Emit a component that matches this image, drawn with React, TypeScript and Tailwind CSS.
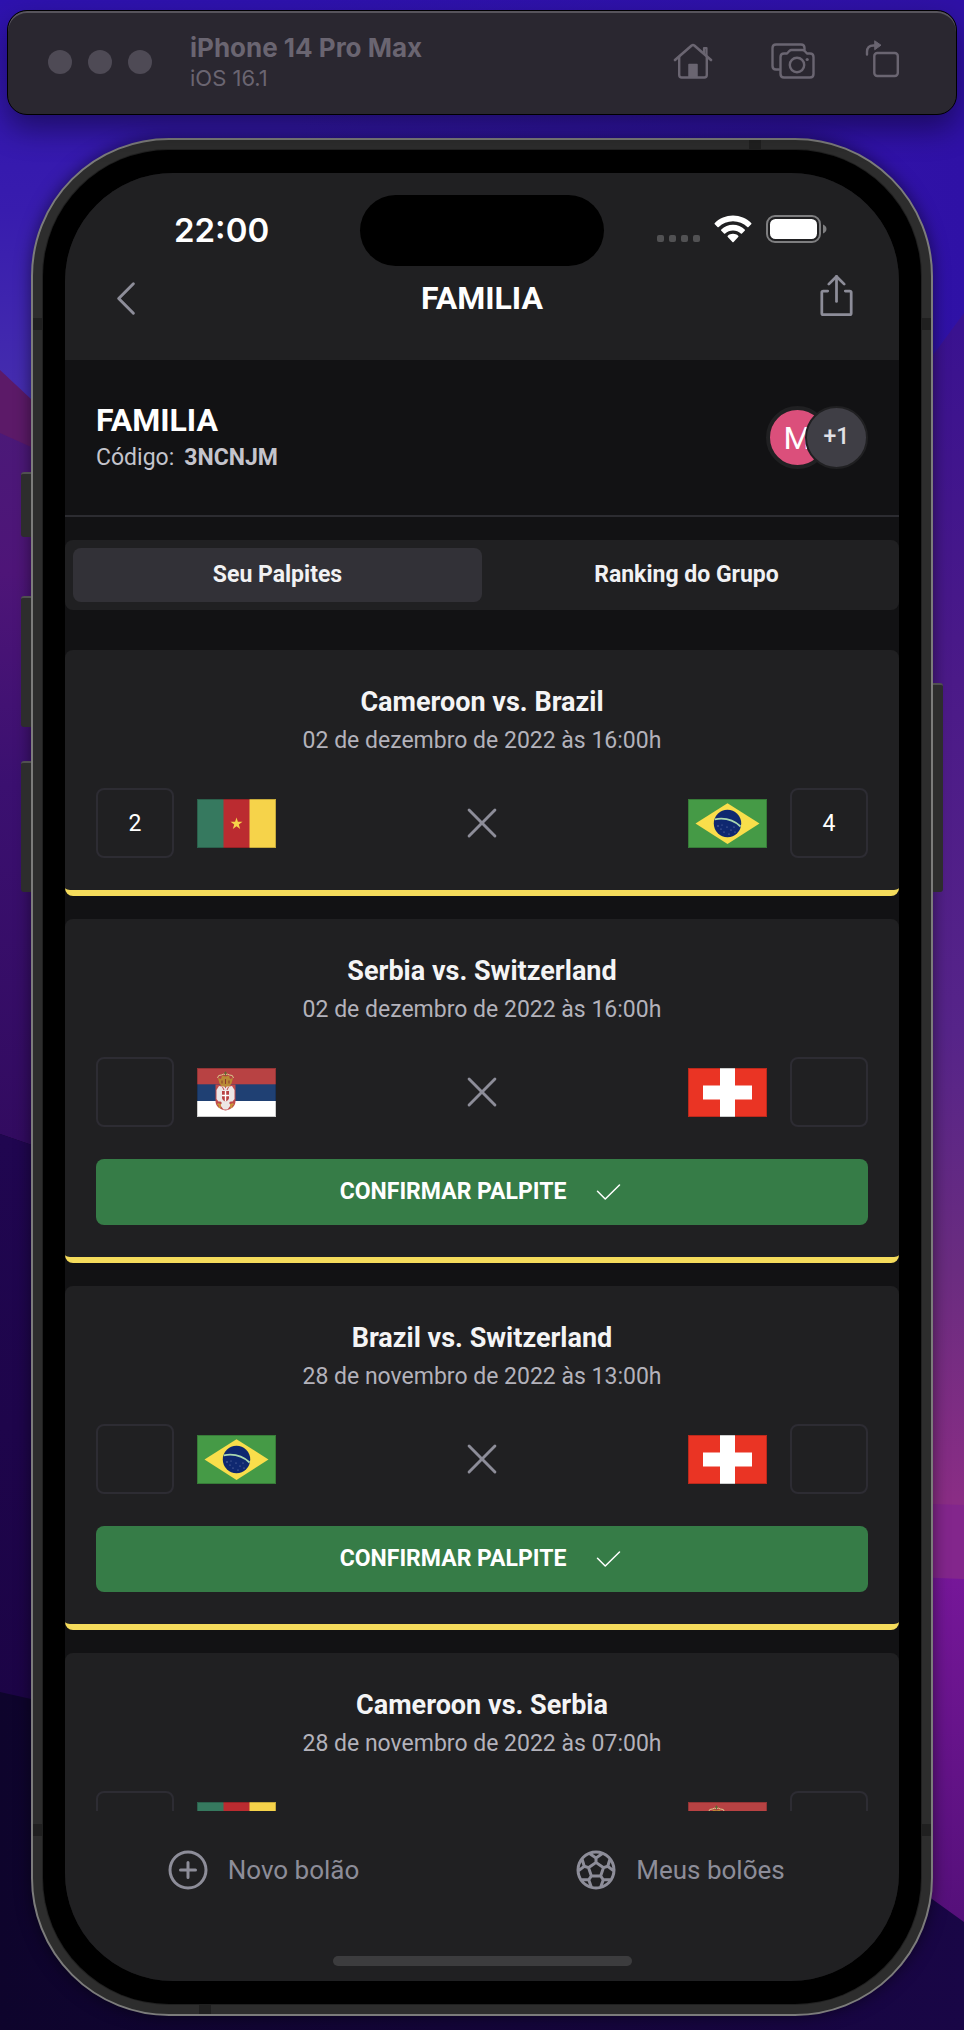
import type { ReactNode } from "react";
import { PiCaretLeft, PiPlusCircle, PiSoccerBall, PiX } from "react-icons/pi";

type Team = "Cameroon" | "Brazil" | "Serbia" | "Switzerland";

type Game = {
  id: number;
  home: Team;
  away: Team;
  date: string;
  canConfirm: boolean;
  homePoints?: string;
  awayPoints?: string;
};

const games: Game[] = [
  { id: 1, home: "Cameroon", away: "Brazil", date: "02 de dezembro de 2022 às 16:00h", canConfirm: false, homePoints: "2", awayPoints: "4" },
  { id: 2, home: "Serbia", away: "Switzerland", date: "02 de dezembro de 2022 às 16:00h", canConfirm: true },
  { id: 3, home: "Brazil", away: "Switzerland", date: "28 de novembro de 2022 às 13:00h", canConfirm: true },
  { id: 4, home: "Cameroon", away: "Serbia", date: "28 de novembro de 2022 às 07:00h", canConfirm: false },
];

function Wallpaper() {
  return (
    <svg className="absolute inset-0 size-full" viewBox="0 0 964 2030" preserveAspectRatio="none" aria-hidden="true">
      <defs>
        <linearGradient id="top" x1="0" y1="0" x2="0" y2="1">
          <stop offset="0" stopColor="#2e12ae" />
          <stop offset="0.5" stopColor="#381cae" />
          <stop offset="1" stopColor="#462fae" />
        </linearGradient>
        <linearGradient id="topRight" x1="0" y1="0" x2="1" y2="0">
          <stop offset="0.3" stopColor="#2f11a6" stopOpacity="0" />
          <stop offset="1" stopColor="#2f11a6" />
        </linearGradient>
        <linearGradient id="left" gradientUnits="userSpaceOnUse" x1="0" y1="430" x2="0" y2="1140">
          <stop offset="0" stopColor="#4b1978" />
          <stop offset="0.2" stopColor="#4e1578" />
          <stop offset="0.5" stopColor="#3b1070" />
          <stop offset="1" stopColor="#320b60" />
        </linearGradient>
        <linearGradient id="leftLow" gradientUnits="userSpaceOnUse" x1="0" y1="1140" x2="0" y2="1710">
          <stop offset="0" stopColor="#200650" />
          <stop offset="1" stopColor="#1c0446" />
        </linearGradient>
        <linearGradient id="right" gradientUnits="userSpaceOnUse" x1="0" y1="330" x2="0" y2="1500">
          <stop offset="0" stopColor="#3a1290" />
          <stop offset="0.3" stopColor="#4b1a88" />
          <stop offset="0.6" stopColor="#562489" />
          <stop offset="0.8" stopColor="#6a2c80" />
          <stop offset="1" stopColor="#8a2d85" />
        </linearGradient>
        <linearGradient id="rightLow" gradientUnits="userSpaceOnUse" x1="0" y1="1575" x2="0" y2="1920">
          <stop offset="0" stopColor="#761799" />
          <stop offset="1" stopColor="#55107a" />
        </linearGradient>
        <linearGradient id="floor" x1="0" y1="0" x2="1" y2="0">
          <stop offset="0" stopColor="#0e042c" />
          <stop offset="1" stopColor="#190646" />
        </linearGradient>
      </defs>
      <rect width="964" height="420" fill="url(#top)" />
      <rect width="964" height="420" fill="url(#topRight)" />
      <path d="M0 430 L482 480 V1300 L0 1134Z" fill="url(#left)" />
      <path d="M0 370 L31 399 L60 440 V460 L0 433Z" fill="#5c1a68" />
      <path d="M0 1134 L482 1300 V1800 L0 1692Z" fill="url(#leftLow)" />
      <path d="M482 400 H900 L964 313 V1520 H482Z" fill="url(#right)" />
      <path d="M482 1490 L964 1505 V1590 H482Z" fill="#83268c" />
      <path d="M482 1560 L964 1579 V1930 L482 1700Z" fill="url(#rightLow)" />
      <path d="M0 1692 L120 1775 H760 L964 1922 V2030 H0Z" fill="url(#floor)" />
    </svg>
  );
}

function HomeIcon() {
  return (
    <svg className="h-9 w-10" viewBox="0 0 40 36" fill="none" stroke="currentColor" strokeWidth="2" strokeLinecap="round" strokeLinejoin="round" aria-hidden="true">
      <path d="M2 17 L18.700 2.500 Q20 1.500 21.300 2.500 L38 17" strokeWidth="2.600" />
      <path d="M6.200 14 V32 Q6.200 34.500 8.700 34.500 H31.300 Q33.800 34.500 33.800 32 V14" strokeWidth="2.400" />
      <path d="M31 10.500 V5 H33.500 V13" strokeWidth="2.200" />
      <path d="M16 34 V21.500 H24 V34Z" fill="currentColor" stroke="currentColor" strokeWidth="1.500" />
    </svg>
  );
}

function ScreenshotIcon() {
  return (
    <svg className="h-9 w-11" viewBox="0 0 44 36" fill="none" stroke="currentColor" strokeWidth="2.400" strokeLinecap="round" strokeLinejoin="round" aria-hidden="true">
      <path d="M8 26.500 H5 Q1.500 26.500 1.500 23 V5 Q1.500 1.500 5 1.500 H30 Q33.500 1.500 33.500 5 V6.500" />
      <path d="M13 10.500 H16 L18.500 7.800 Q19.300 7 20.500 7 H31.500 Q32.700 7 33.500 7.800 L36 10.500 H39 Q42.500 10.500 42.500 14 V31 Q42.500 34.500 39 34.500 H13 Q9.500 34.500 9.500 31 V14 Q9.500 10.500 13 10.500Z" />
      <circle cx="26" cy="22" r="7.200" />
      <circle cx="36.200" cy="16.500" r="1.600" fill="currentColor" stroke="none" />
    </svg>
  );
}

function RotateIcon() {
  return (
    <svg className="h-[38px] w-9" viewBox="0 0 36 38" fill="none" stroke="currentColor" strokeWidth="2.400" strokeLinecap="round" aria-hidden="true">
      <rect x="9.300" y="13" width="23.500" height="23" rx="3" />
      <path d="M2 14.500 V12 Q2 5.500 8.500 5.500 H10" />
      <path d="M10 1 L16 5.200 L10 9.500Z" fill="currentColor" strokeWidth="1" strokeLinejoin="round" />
    </svg>
  );
}

function SimulatorBar() {
  return (
    <header className="relative z-10 mx-[7px] flex h-[105px] shrink-0 items-center rounded-[20px] border border-black bg-[#2a2730] pr-[55px] pb-[2px] pl-[40px] text-[#6a6571] shadow-[inset_0_2px_0_#57545c,0_14px_30px_rgba(0,0,0,0.4)]">
      <div className="flex gap-4">
        <span className="size-6 rounded-full bg-[#4e4a55]" />
        <span className="size-6 rounded-full bg-[#4e4a55]" />
        <span className="size-6 rounded-full bg-[#4e4a55]" />
      </div>
      <div className="ml-[38px] flex-1 font-['Inter',sans-serif]">
        <h1 className="text-[26px] leading-8 font-bold">iPhone 14 Pro Max</h1>
        <p className="text-[22px] leading-7">iOS 16.1</p>
      </div>
      <div className="flex items-center pb-[2px]">
        <button type="button" aria-label="Home"><HomeIcon /></button>
        <button type="button" aria-label="Screenshot" className="ml-[58px]"><ScreenshotIcon /></button>
        <button type="button" aria-label="Rotate" className="-mt-1 ml-[50px]"><RotateIcon /></button>
      </div>
    </header>
  );
}

function StatusBar() {
  return (
    <div className="relative flex h-[91px] items-end justify-between pr-[72px] pl-[109px] text-white">
      <span className="font-['Inter',sans-serif] text-[33px] leading-[68px] font-semibold">22:00</span>
      <div className="absolute top-[22px] left-1/2 h-[71px] w-[244px] -translate-x-1/2 rounded-full bg-black" />
      <div className="flex h-[70px] items-center">
        <div className="mt-[18px] flex gap-[5px]">
          <span className="size-[7px] rounded-[2px] bg-[#515153]" />
          <span className="size-[7px] rounded-[2px] bg-[#515153]" />
          <span className="size-[7px] rounded-[2px] bg-[#515153]" />
          <span className="size-[7px] rounded-[2px] bg-[#515153]" />
        </div>
        <svg className="ml-[14px] h-7 w-[38px]" viewBox="0 0 38 28" fill="currentColor" aria-hidden="true">
          <path d="M19 0.500C26 0.500 32.500 3.300 37.200 7.900a.9.900 0 0 1 0 1.300L34.500 11.900a.9.900 0 0 1-1.200 0C29.500 8.300 24.500 6.200 19 6.200S8.500 8.300 4.700 11.900a.9.900 0 0 1-1.200 0L0.800 9.200a.9.900 0 0 1 0-1.300C5.500 3.300 12 .5 19 .5Z" />
          <path d="M19 9.800c4.500 0 8.600 1.700 11.700 4.600a.9.900 0 0 1 0 1.300L28 18.400a.9.900 0 0 1-1.200 0C24.700 16.500 22 15.400 19 15.400s-5.700 1.100-7.800 3a.9.900 0 0 1-1.200 0L7.300 15.700a.9.900 0 0 1 0-1.300C10.400 11.500 14.500 9.800 19 9.800Z" />
          <path d="M19 18.800c2 0 3.800.7 5.200 1.900a.9.900 0 0 1 0 1.300L19.600 27a.9.900 0 0 1-1.200 0L13.800 22a.9.900 0 0 1 0-1.300C15.200 19.500 17 18.800 19 18.800Z" />
        </svg>
        <svg className="ml-[14px] h-7 w-[61px]" viewBox="0 0 61 28" aria-hidden="true">
          <rect x="1" y="1" width="53" height="26" rx="8" fill="none" stroke="#7e7e80" strokeWidth="2" />
          <rect x="4" y="4" width="47" height="20" rx="5.500" fill="#fff" />
          <path d="M57 9.500c2 .6 3.500 2.300 3.500 4.500S59 17.900 57 18.500Z" fill="#7e7e80" />
        </svg>
      </div>
    </div>
  );
}

function ExportIcon() {
  return (
    <svg className="size-[47px]" viewBox="0 0 256 256" fill="none" stroke="currentColor" strokeWidth="15" strokeLinecap="round" strokeLinejoin="round" aria-hidden="true">
      <path d="M86 66 128 24 170 66" />
      <path d="M128 24V160" />
      <path d="M176 104h24a8 8 0 0 1 8 8v112a8 8 0 0 1-8 8H56a8 8 0 0 1-8-8V112a8 8 0 0 1 8-8H80" />
    </svg>
  );
}

function NavBar() {
  return (
    <div className="grid h-24 grid-cols-[1fr_auto_1fr] items-start px-[39px] text-[#8d8d99]">
      <button type="button" aria-label="Voltar" className="mt-[11px] justify-self-start">
        <PiCaretLeft className="size-[47px]" />
      </button>
      <h2 className="mt-[11px] text-[32px] leading-[47px] font-bold text-white">FAMILIA</h2>
      <button type="button" aria-label="Compartilhar" className="mt-2 justify-self-end">
        <ExportIcon />
      </button>
    </div>
  );
}

function PoolHeader() {
  return (
    <section className="flex h-[157px] items-center justify-between border-b-2 border-[#2c2c31] px-[31px]">
      <div>
        <h3 className="text-[32px] leading-[39px] font-bold text-white">FAMILIA</h3>
        <p className="flex gap-[10px] text-[23px] leading-[35px] text-[#c4c4cc]">
          Código: <strong className="font-bold">3NCNJM</strong>
        </p>
      </div>
      <div className="flex">
        <span className="flex size-[63px] items-center justify-center rounded-full border-4 border-[#202022] bg-[#db4f7b] text-[32px] text-white">M</span>
        <span className="z-10 -ml-6 flex size-[63px] items-center justify-center rounded-full border-2 border-[#202022] bg-[#3f3e45] text-[23px] font-medium text-[#e1e1e6]">+1</span>
      </div>
    </section>
  );
}

function PoolTabs() {
  return (
    <div role="tablist" className="mt-[23px] flex shrink-0 rounded-lg bg-[#202022] p-2 text-[23px] leading-[54px] font-bold text-[#f1f1f3]">
      <button type="button" role="tab" aria-selected="true" className="flex-1 rounded-lg bg-[#323137]">Seu Palpites</button>
      <button type="button" role="tab" aria-selected="false" className="flex-1 rounded-lg">Ranking do Grupo</button>
    </div>
  );
}

function FlagArt({ team }: { team: Team }) {
  switch (team) {
    case "Cameroon":
      return (
        <>
          <rect width="27" height="49" fill="#36795f" />
          <rect x="26.500" width="26.500" height="49" fill="#bb2b30" />
          <rect x="52.500" width="26.500" height="49" fill="#f6d34a" />
          <path d="M39.500 18.500l1.400 4.300h4.600l-3.700 2.700 1.400 4.400-3.700-2.700-3.700 2.700 1.400-4.400-3.700-2.700h4.600Z" fill="#f6d34a" />
        </>
      );
    case "Brazil":
      return (
        <>
          <rect width="79" height="49" fill="#459a46" />
          <path d="M39.500 4.300 71.500 24.500 39.500 45 7.500 24.500Z" fill="#f9de4b" />
          <circle cx="39.500" cy="24.500" r="13.700" fill="#0f2870" />
          <path d="M26.800 20.300Q42 17.500 52.600 27.500" stroke="#a9d8b0" strokeWidth="1.800" fill="none" />
          <g fill="#7d8bb8">
            <circle cx="30" cy="27" r=".7" /><circle cx="33" cy="30" r=".6" /><circle cx="36" cy="33" r=".6" />
            <circle cx="39" cy="28" r=".6" /><circle cx="43" cy="31" r=".6" /><circle cx="46" cy="28" r=".6" />
            <circle cx="41" cy="35" r=".6" /><circle cx="47" cy="33" r=".6" /><circle cx="34" cy="26" r=".5" />
          </g>
        </>
      );
    case "Switzerland":
      return (
        <>
          <rect width="79" height="49" fill="#ea3424" />
          <path d="M32 0h15v17.500h17V31.500H47V49H32V31.500H15V17.500H32Z" fill="#fff" />
        </>
      );
    case "Serbia":
      return (
        <>
          <rect width="79" height="17" fill="#b84243" />
          <rect y="16.300" width="79" height="17" fill="#1f4073" />
          <rect y="33" width="79" height="16" fill="#fff" />
          <path d="M18.500 16.500h20V33c0 5-4 8.500-10 9.500-6-1-10-4.500-10-9.500Z" fill="#c04a4b" />
          <path d="M28.500 20.500l-1.500-3-2.500 1-2.500-.5-2.500 4v9l2 2.500 3 .5-1 3.500 3 4h4l3-4-1-3.500 3-.5 2-2.500v-9l-2.500-4-2.500.5-2.500-1Z" fill="#ece6e6" />
          <path d="M25 23h7V29.500c0 2-1.500 3.500-3.500 4-2-.5-3.500-2-3.500-4Z" fill="#b84243" />
          <path d="M28.500 23v10.500M25 27.500h7" stroke="#fff" strokeWidth="1.400" />
          <path d="M25.500 19l1.500 3M31.500 19l-1.500 3M23 33.500l1.500 2M34 33.500l-1.500 2" stroke="#c04a4b" strokeWidth="1" />
          <path d="M20.500 36l2.500 1-.5 3M36.500 36l-2.500 1 .5 3" stroke="#c8973a" strokeWidth="2" fill="none" />
          <path d="M22.500 15.500L21 10l3 1 1-3.500 3.500 1 3.500-1 1 3.500 3-1-1.500 5.500L32 18.500h-7Z" fill="#b98a35" />
          <path d="M20.500 10q.5-3.500 4-3 2-1.500 4-.5 2-1 4 .5 3.500-.5 4 3" stroke="#d9c98c" strokeWidth="1" fill="none" />
          <path d="M28.500 3.500v4M27 5h3" stroke="#5f6a35" strokeWidth="1" />
          <path d="M25 12.500v3M28.500 11v5M32 12.500v3" stroke="#8c3a2c" strokeWidth="1" />
        </>
      );
  }
}

function Flag({ team }: { team: Team }) {
  return (
    <svg className="h-[49px] w-[79px] shrink-0" viewBox="0 0 79 49" role="img" aria-label={team}>
      <FlagArt team={team} />
      <rect x="0.500" y="0.500" width="78" height="48" fill="none" stroke="#000" strokeOpacity="0.200" />
    </svg>
  );
}

function ScoreInput({ label, value }: { label: string; value?: string }) {
  return (
    <input
      type="text"
      inputMode="numeric"
      aria-label={label}
      defaultValue={value}
      className="h-[70px] w-[78px] rounded-lg border-2 border-[#2d2c33] bg-transparent text-center text-[23px] text-white"
    />
  );
}

function CheckIcon() {
  return (
    <svg className="size-8" viewBox="0 0 256 256" fill="none" stroke="currentColor" strokeWidth="12" strokeLinecap="round" strokeLinejoin="round" aria-hidden="true">
      <path d="M220 72 106 184 44 122" />
    </svg>
  );
}

function GameCard({ game }: { game: Game }) {
  return (
    <article className="shrink-0 rounded-lg border-b-6 border-[#f5dc5c] bg-[#202022] px-[31px] py-8">
      <h4 className="text-center text-[27px] leading-10 font-bold text-[#f4f4f5]">{game.home} vs. {game.away}</h4>
      <p className="text-center text-[23px] leading-[38px] text-[#b3b2bb]">{game.date}</p>
      <div className="mt-7 flex items-center justify-between">
        <div className="flex items-center gap-[23px]">
          <ScoreInput label={`Gols de ${game.home}`} value={game.homePoints} />
          <Flag team={game.home} />
        </div>
        <PiX className="size-[46px] text-[#8d8d99]" aria-hidden="true" />
        <div className="flex items-center gap-[23px]">
          <Flag team={game.away} />
          <ScoreInput label={`Gols de ${game.away}`} value={game.awayPoints} />
        </div>
      </div>
      {game.canConfirm && (
        <button type="button" className="mt-8 flex h-[66px] w-full items-center justify-center gap-[26px] rounded-lg bg-[#367c47] text-[23px] font-bold text-white">
          CONFIRMAR PALPITE
          <CheckIcon />
        </button>
      )}
    </article>
  );
}

function BottomTab({ icon, children }: { icon: ReactNode; children: ReactNode }) {
  return (
    <a href="#" className="flex flex-1 items-center justify-center gap-4 pr-6">
      {icon}
      {children}
    </a>
  );
}

function BottomBar() {
  return (
    <footer className="flex h-[170px] shrink-0 flex-col bg-[#202022] text-[26px] text-[#8d8d99]">
      <nav className="flex h-[118px]">
        <BottomTab icon={<PiPlusCircle className="size-[48px]" />}>Novo bolão</BottomTab>
        <BottomTab icon={<PiSoccerBall className="size-[48px]" />}>Meus bolões</BottomTab>
      </nav>
      <div className="mx-auto mt-[27px] h-[10px] w-[299px] rounded-full bg-[#3c3c3e]" />
    </footer>
  );
}

function SideKeys() {
  return (
    <div aria-hidden="true">
      <span className="absolute top-[332px] -left-[12px] h-[65px] w-[10px] rounded-l-[3px] border-t-2 border-[#505050] bg-[#2d2d2d]" />
      <span className="absolute top-[456px] -left-[12px] h-[131px] w-[10px] rounded-l-[3px] border-t-2 border-[#505050] bg-[#2d2d2d]" />
      <span className="absolute top-[621px] -left-[12px] h-[131px] w-[10px] rounded-l-[3px] border-t-2 border-[#505050] bg-[#2d2d2d]" />
      <span className="absolute top-[543px] -right-[12px] h-[209px] w-[10px] rounded-r-[3px] border-t-2 border-[#505050] bg-[#2d2d2d]" />
      <span className="absolute top-[178px] left-0 h-3 w-[10px] bg-[#202020]" />
      <span className="absolute top-[178px] right-0 h-3 w-[10px] bg-[#202020]" />
      <span className="absolute bottom-[178px] left-0 h-3 w-[10px] bg-[#202020]" />
      <span className="absolute right-0 bottom-[178px] h-3 w-[10px] bg-[#202020]" />
      <span className="absolute top-0 right-[170px] h-[10px] w-3 bg-[#202020]" />
      <span className="absolute bottom-0 left-[166px] h-[10px] w-3 bg-[#202020]" />
    </div>
  );
}

export default function App() {
  return (
    <div className="relative flex h-screen flex-col overflow-hidden bg-[#0e042c] pt-[10px] pb-[14px] font-['Roboto',sans-serif]">
      <Wallpaper />
      <SimulatorBar />
      <main className="relative mx-[31px] mt-[23px] flex min-h-0 flex-1 flex-col rounded-[138px] border-2 border-[#7c7c7b] bg-[#2d2d2d] p-[10px] shadow-[0_0_16px_rgba(0,0,0,0.5)]">
        <SideKeys />
        <div className="relative flex min-h-0 flex-1 flex-col rounded-[126px] bg-black px-[22px] py-[23px] shadow-[0_0_0_1px_#202020]">
          <div className="flex min-h-0 flex-1 flex-col overflow-hidden rounded-[108px] bg-[#121214]">
            <div className="shrink-0 bg-[#202022]">
              <StatusBar />
              <NavBar />
            </div>
            <PoolHeader />
            <PoolTabs />
            <div className="flex min-h-0 flex-1 flex-col gap-[23px] overflow-hidden pt-10">
              {games.map((game) => (
                <GameCard key={game.id} game={game} />
              ))}
            </div>
            <BottomBar />
          </div>
        </div>
      </main>
    </div>
  );
}
